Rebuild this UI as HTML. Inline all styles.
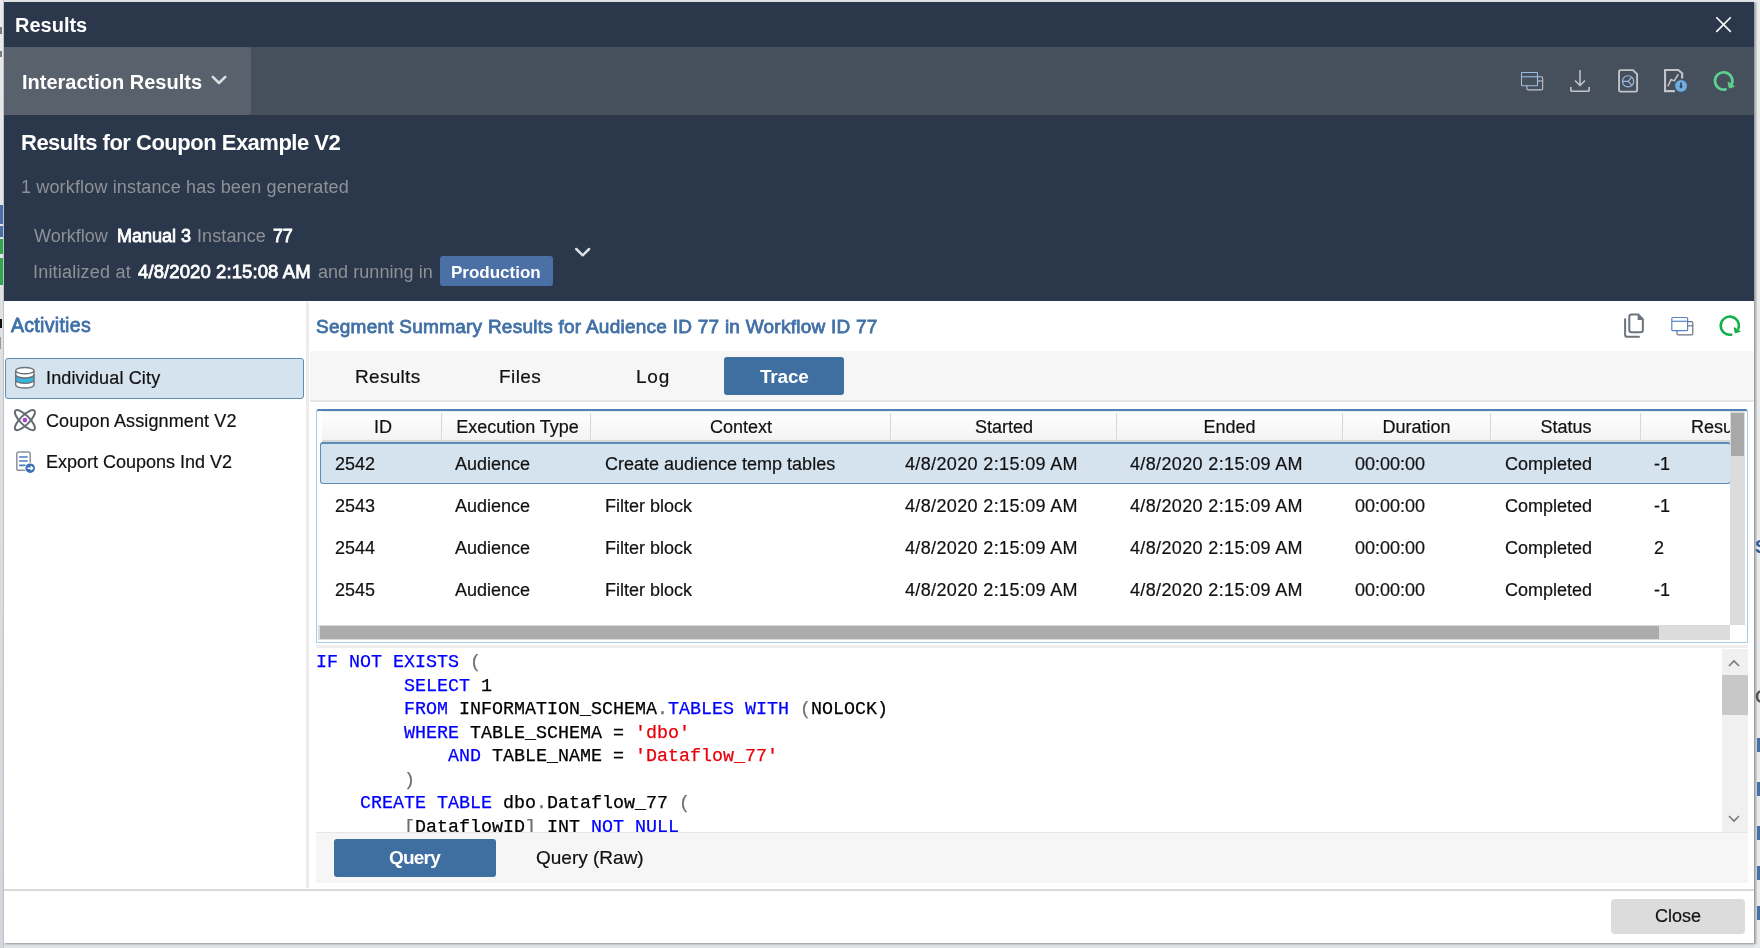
<!DOCTYPE html>
<html><head><meta charset="utf-8">
<style>
*{box-sizing:border-box;margin:0;padding:0}
html,body{width:1760px;height:948px;overflow:hidden;background:#e2e3e5;font-family:"Liberation Sans",sans-serif;position:relative}
.a{position:absolute;}
.t{position:absolute;white-space:pre;line-height:1;will-change:transform}
.t[style*="color:#111"]{-webkit-text-stroke:0.2px #111}
.gray{color:#8e9196}
.w{color:#fff}
.b{font-weight:bold}
.mono{font-family:"Liberation Mono",monospace;font-size:18.33px;line-height:1;position:absolute;white-space:pre;left:316px;will-change:transform;-webkit-text-stroke:0.25px currentColor}
.kw{color:#0000ff}.st{color:#e8000b}.pu{color:#6e6e6e}
</style></head><body>
<!-- outside -->
<div class="a" style="left:0;top:0;width:4px;height:948px;background:linear-gradient(#e8eaec,#dfe2e5 300px,#d3d6da)"></div>
<div class="a" style="left:3px;top:0;width:1px;height:948px;background:#c4c6c9"></div>
<div class="a" style="left:0;top:27px;width:2px;height:7px;background:#7a7d80"></div>
<div class="a" style="left:0;top:51px;width:2px;height:6px;background:#7a7d80"></div>
<div class="a" style="left:0;top:205px;width:3px;height:19px;background:#4a70a8"></div>
<div class="a" style="left:0;top:226px;width:3px;height:11px;background:#4a70a8"></div>
<div class="a" style="left:0;top:239px;width:3px;height:15px;background:#2ea84f"></div>
<div class="a" style="left:0;top:258px;width:3px;height:27px;background:#2ea84f"></div>
<div class="a" style="left:0;top:319px;width:2px;height:9px;background:#111"></div>
<div class="a" style="left:0;top:337px;width:1px;height:12px;background:#999"></div>
<div class="a" style="left:1755px;top:0;width:5px;height:948px;background:#e9eaeb"></div>
<div class="a" style="left:1754px;top:2px;width:2.5px;height:942px;background:#cfd0d2"></div>
<div class="t" style="left:1755px;top:538px;font-size:18px;color:#2f5f9a;font-weight:bold">S</div>
<div class="t" style="left:1755px;top:688px;font-size:18px;color:#555;font-weight:bold">C</div>
<div class="a" style="left:1757px;top:738px;width:3px;height:14px;background:#4a70a8"></div>
<div class="a" style="left:1757px;top:782px;width:3px;height:14px;background:#4a70a8"></div>
<div class="a" style="left:1757px;top:826px;width:3px;height:14px;background:#4a70a8"></div>
<div class="a" style="left:1757px;top:866px;width:3px;height:14px;background:#4a70a8"></div>
<div class="a" style="left:1757px;top:906px;width:3px;height:14px;background:#4a70a8"></div>
<!-- dialog -->
<div class="a" style="left:4px;top:2px;width:1750px;height:941px;background:#fff;box-shadow:1px 1px 2px rgba(0,0,0,.35)"></div>

<!-- title bar -->
<div class="a" style="left:4px;top:2px;width:1750px;height:45px;background:#2b384b"></div>
<div class="t w b" style="left:15px;top:15px;font-size:20px">Results</div>
<svg class="a" style="left:1714px;top:15px" width="20" height="20" viewBox="0 0 20 20"><path d="M2.3 2.3L16.8 16.9M16.8 2.3L2.3 16.9" stroke="#fff" stroke-width="1.6" fill="none"/></svg>

<!-- toolbar -->
<div class="a" style="left:4px;top:47px;width:1750px;height:68px;background:#46505d"></div>
<div class="a" style="left:4px;top:47px;width:247px;height:68px;background:#58616c;border-radius:0 3px 3px 0"></div>
<div class="t w b" style="left:22px;top:72px;font-size:20px">Interaction Results</div>
<svg class="a" style="left:208px;top:72px" width="22" height="16" viewBox="0 0 22 16"><path d="M4.8 4.8L11 11L17.3 4.8" stroke="#dde0e3" stroke-width="2.5" fill="none" stroke-linecap="round" stroke-linejoin="round"/></svg>

<!-- toolbar icons -->
<svg class="a" style="left:1516px;top:66px" width="32" height="30" viewBox="0 0 32 30">
  <rect x="10.9" y="10.8" width="15.8" height="13.1" rx="1.5" fill="none" stroke="#c0c3c7" stroke-width="1.1"/>
  <line x1="10.9" y1="15" x2="26.7" y2="15" stroke="#c0c3c7" stroke-width="1.1"/>
  <rect x="5.5" y="6.5" width="16" height="13.3" rx="0.6" fill="#46505d" stroke="#9fbbe0" stroke-width="1.1"/>
  <line x1="5.5" y1="10.8" x2="21.5" y2="10.8" stroke="#9fbbe0" stroke-width="1.1"/>
</svg>
<svg class="a" style="left:1566px;top:66px" width="28" height="30" viewBox="0 0 28 30">
  <path d="M14 4V19.5M9 14.5L14 19.5L19 14.5" stroke="#c3c5c8" stroke-width="1.5" fill="none"/>
  <path d="M4.8 21V23.5Q4.8 25.3 6.6 25.3H21.4Q23.2 25.3 23.2 23.5V21" stroke="#c3c5c8" stroke-width="1.6" fill="none"/>
</svg>
<svg class="a" style="left:1614px;top:66px" width="28" height="30" viewBox="0 0 28 30">
  <path d="M19 4.1L23.1 8.2V24.1Q23.1 25.65 21.6 25.65H6.55Q5.05 25.65 5.05 24.1V5.6Q5.05 4.1 6.55 4.1Z" stroke="#c0c3c7" stroke-width="1.9" fill="none"/>
  <circle cx="14.08" cy="15.35" r="5.6" stroke="#9dbbe3" stroke-width="1.2" fill="none"/>
  <path d="M8.5 15.35H14.08L17.83 11.19M14.08 15.35L18.04 19.31" stroke="#9dbbe3" stroke-width="1.2" fill="none"/>
</svg>
<svg class="a" style="left:1660px;top:66px" width="32" height="30" viewBox="0 0 32 30">
  <path d="M14.9 25.1H5.05V4H18.2L22.15 7.2V12.5" stroke="#c0c3c7" stroke-width="2.1" fill="none"/>
  <path d="M7.9 20.25L11.08 13.6L14.24 14.87L18.35 8.23" stroke="#c0c3c7" stroke-width="1.6" fill="none"/>
  <circle cx="21.04" cy="19.94" r="6.2" fill="#72afe0" stroke="#2f4a66" stroke-width="0.5"/>
  <path d="M21.04 16.4V20.6" stroke="#2a4661" stroke-width="1.7"/>
  <path d="M19.1 20.1H23L21.04 22.7Z" fill="#2a4661"/>
</svg>
<svg class="a" style="left:1710px;top:67px" width="28" height="28" viewBox="0 0 28 28">
  <path d="M15.63 22.42A8.7 8.7 0 1 1 22.0 16.5" stroke="#5ecf8f" stroke-width="2.7" fill="none" stroke-linecap="round"/>
  <path d="M18.1 15.1L19.3 21L24.4 19.4Z" fill="#5ecf8f" stroke="#5ecf8f" stroke-width="1" stroke-linejoin="round"/>
</svg>

<!-- header section -->
<div class="a" style="left:4px;top:115px;width:1750px;height:186px;background:#2b384b"></div>
<div class="t w b" style="left:21px;top:131.5px;font-size:22px;letter-spacing:-0.5px">Results for Coupon Example V2</div>
<div class="t gray" style="left:21px;top:178px;font-size:18px;letter-spacing:0.15px">1 workflow instance has been generated</div>
<div class="t gray" style="left:33.8px;top:227px;font-size:18px">Workflow</div><div class="t w" style="left:116.5px;top:227px;font-size:18px;-webkit-text-stroke:0.8px #fff">Manual 3</div><div class="t gray" style="left:196.5px;top:227px;font-size:18px;letter-spacing:0.1px">Instance</div><div class="t w" style="left:272.5px;top:227px;font-size:18px;-webkit-text-stroke:0.8px #fff;letter-spacing:-0.3px">77</div>
<div class="t gray" style="left:33px;top:263px;font-size:18px;letter-spacing:0.2px">Initialized at</div><div class="t w" style="left:138px;top:262.5px;font-size:18.5px;-webkit-text-stroke:0.8px #fff;letter-spacing:0.1px">4/8/2020 2:15:08 AM</div><div class="t gray" style="left:318px;top:263px;font-size:18px;letter-spacing:0.05px">and running in</div>
<div class="a" style="left:440px;top:256px;width:113px;height:30px;background:#4a70a6;border-radius:3px"></div>
<div class="t w b" style="left:451px;top:263.5px;font-size:17px">Production</div>
<svg class="a" style="left:572px;top:244px" width="22" height="16" viewBox="0 0 22 16"><path d="M4.3 5L10.7 11.3L17.1 5" stroke="#dde0e3" stroke-width="2.5" fill="none" stroke-linecap="round" stroke-linejoin="round"/></svg>

<!-- left panel -->
<div class="a" style="left:306px;top:302px;width:3px;height:586px;background:#ececec"></div>
<div class="t" style="left:10.5px;top:316.3px;font-size:19.5px;color:#3f70a9;-webkit-text-stroke:0.8px #3f70a9;letter-spacing:0.3px">Activities</div>
<div class="a" style="left:5px;top:357.5px;width:299px;height:41px;background:#d5e3ef;border:1.3px solid #5e8db5;border-radius:3px"></div>
<svg class="a" style="left:12px;top:364px" width="26" height="28" viewBox="0 0 26 28">
  <path d="M3.7 6.65V20.9A9.15 3.15 0 0 0 22 20.9V6.65Z" fill="#fff"/>
  <path d="M3.7 10.8A9.15 3.15 0 0 0 22 10.8V16.2A9.15 3.15 0 0 1 3.7 16.2Z" fill="#3ab4dc"/>
  <path d="M3.7 6.65V20.9A9.15 3.15 0 0 0 22 20.9V6.65" fill="none" stroke="#6c7176" stroke-width="1.4"/>
  <ellipse cx="12.85" cy="6.65" rx="9.15" ry="3.15" fill="#fff" stroke="#6c7176" stroke-width="1.4"/>
  <path d="M3.7 10.8A9.15 3.15 0 0 0 22 10.8M3.7 16.2A9.15 3.15 0 0 0 22 16.2" fill="none" stroke="#6c7176" stroke-width="1.4"/>
</svg>
<div class="t" style="left:45.5px;top:369px;font-size:18px;color:#111;letter-spacing:0.15px">Individual City</div>
<svg class="a" style="left:11px;top:406px" width="28" height="28" viewBox="0 0 28 28">
  <ellipse cx="13.9" cy="14.1" rx="13.4" ry="4.6" transform="rotate(45 13.9 14.1)" fill="none" stroke="#646c73" stroke-width="2"/>
  <ellipse cx="13.9" cy="14.1" rx="13.4" ry="4.6" transform="rotate(-45 13.9 14.1)" fill="none" stroke="#646c73" stroke-width="2"/>
  <circle cx="13.9" cy="14.1" r="2.3" fill="#b03cd0"/>
</svg>
<div class="t" style="left:45.5px;top:411.5px;font-size:18px;color:#111;letter-spacing:0.12px">Coupon Assignment V2</div>
<svg class="a" style="left:12px;top:448px" width="26" height="28" viewBox="0 0 26 28">
  <rect x="4.8" y="3.9" width="13.4" height="18.3" rx="1.8" fill="#fff" stroke="#8c9299" stroke-width="1.5"/>
  <path d="M7.1 9H15.7M7.1 13H15.7M7.1 17.4H15.7" stroke="#4a7bbf" stroke-width="1.7"/>
  <circle cx="18.2" cy="20.2" r="5.6" fill="#fff"/>
  <circle cx="18.2" cy="20.2" r="4.8" fill="#3b6fb8"/>
  <path d="M15.5 20.2H20.4M18.7 18.3L20.7 20.2L18.7 22.1" stroke="#fff" stroke-width="1.4" fill="none"/>
</svg>
<div class="t" style="left:45.5px;top:453px;font-size:18px;color:#111">Export Coupons Ind V2</div>

<!-- right panel header -->
<div class="t" style="left:316px;top:316.5px;font-size:19px;color:#4271a6;-webkit-text-stroke:0.8px #4271a6;letter-spacing:0.25px">Segment Summary Results for Audience ID 77 in Workflow ID 77</div>
<svg class="a" style="left:1620px;top:311px" width="28" height="30" viewBox="0 0 28 30">
  <path d="M5.1 8.2V23.7Q5.1 25.86 7.2 25.86H18.95" stroke="#6b747c" stroke-width="2" fill="none" stroke-linecap="round"/>
  <path d="M9.3 5.8Q9.3 3.55 11.5 3.55H18.3L22.85 8.1V19.1Q22.85 21.3 20.6 21.3H11.5Q9.3 21.3 9.3 19.1Z" stroke="#6b747c" stroke-width="2" fill="none"/>
  <path d="M17.6 3.6L22.9 8.9H17.6Z" fill="#6b747c"/>
</svg>
<svg class="a" style="left:1666px;top:311px" width="30" height="30" viewBox="0 0 30 30">
  <rect x="11" y="10.6" width="15.8" height="13.3" rx="1.5" fill="none" stroke="#6b737b" stroke-width="1.2"/>
  <line x1="11" y1="14.8" x2="26.8" y2="14.8" stroke="#6b737b" stroke-width="1.2"/>
  <rect x="5.8" y="6.5" width="15.8" height="13.2" rx="1" fill="#fff" stroke="#5585c0" stroke-width="1.2"/>
  <line x1="5.8" y1="10.3" x2="21.6" y2="10.3" stroke="#5585c0" stroke-width="1.2"/>
</svg>
<svg class="a" style="left:1716px;top:312px" width="28" height="28" viewBox="0 0 28 28">
  <path d="M15.38 22.66A9.1 9.1 0 1 1 22.45 16.51" stroke="#12b04a" stroke-width="2.5" fill="none" stroke-linecap="round"/>
  <path d="M18.3 15.8L19.3 20.8L23.9 19.4Z" fill="#12b04a" stroke="#12b04a" stroke-width="1.1" stroke-linejoin="round"/>
</svg>

<!-- tabs bar -->
<div class="a" style="left:310px;top:351px;width:1444px;height:51px;background:#f6f6f6;border-bottom:2px solid #e6e6e6"></div>
<div class="t" style="left:355px;top:366.5px;font-size:19px;color:#111;letter-spacing:0.3px">Results</div>
<div class="t" style="left:498.5px;top:366.5px;font-size:19px;color:#111;letter-spacing:0.4px">Files</div>
<div class="t" style="left:635.5px;top:366.5px;font-size:19px;color:#111;letter-spacing:0.8px">Log</div>
<div class="a" style="left:724px;top:357px;width:120px;height:37.5px;background:#3f6fa0;border-radius:3px"></div>
<div class="t w b" style="left:760px;top:366.5px;font-size:19px;letter-spacing:-0.2px">Trace</div>


<!-- table -->
<div class="a" style="left:316px;top:409px;width:1432px;height:234px;border:1.6px solid #a9cbe3;border-top:2px solid #4f82b5;border-radius:3px 3px 0 0"></div>
<div class="a" style="left:322px;top:411px;width:1408px;height:31px;background:linear-gradient(#fff,#f3f3f3);border-top:1.5px solid #ececec;border-bottom:2px solid #d6d6d6"></div>

<div class="a" style="left:440.5px;top:413px;width:2px;height:27px;background:linear-gradient(90deg,#d8d8d8 50%,#f8f8f8 50%)"></div>
<div class="a" style="left:590px;top:413px;width:2px;height:27px;background:linear-gradient(90deg,#d8d8d8 50%,#f8f8f8 50%)"></div>
<div class="a" style="left:890px;top:413px;width:2px;height:27px;background:linear-gradient(90deg,#d8d8d8 50%,#f8f8f8 50%)"></div>
<div class="a" style="left:1116px;top:413px;width:2px;height:27px;background:linear-gradient(90deg,#d8d8d8 50%,#f8f8f8 50%)"></div>
<div class="a" style="left:1341.5px;top:413px;width:2px;height:27px;background:linear-gradient(90deg,#d8d8d8 50%,#f8f8f8 50%)"></div>
<div class="a" style="left:1490px;top:413px;width:2px;height:27px;background:linear-gradient(90deg,#d8d8d8 50%,#f8f8f8 50%)"></div>
<div class="a" style="left:1640px;top:413px;width:2px;height:27px;background:linear-gradient(90deg,#d8d8d8 50%,#f8f8f8 50%)"></div>
<div class="t" style="left:320px;width:121px;text-align:center;top:418px;font-size:18px;color:#111;padding-left:5px">ID</div>
<div class="t" style="left:441px;width:150px;text-align:center;top:418px;font-size:18px;color:#111;padding-left:3px">Execution Type</div>
<div class="t" style="left:591px;width:300px;text-align:center;top:418px;font-size:18px;color:#111">Context</div>
<div class="t" style="left:891px;width:226px;text-align:center;top:418px;font-size:18px;color:#111">Started</div>
<div class="t" style="left:1117px;width:225px;text-align:center;top:418px;font-size:18px;color:#111">Ended</div>
<div class="t" style="left:1342px;width:149px;text-align:center;top:418px;font-size:18px;color:#111">Duration</div>
<div class="t" style="left:1491px;width:150px;text-align:center;top:418px;font-size:18px;color:#111">Status</div>
<div class="t" style="left:1691px;top:418px;font-size:18px;color:#111">Resu</div>
<div class="a" style="left:319.5px;top:442px;width:1411px;height:41.5px;background:#d5e3ef;border:1.5px solid #5b8db8;border-top-width:2px;border-radius:3px"></div>
<div class="t" style="left:334.5px;top:455px;font-size:18px;color:#111">2542</div>
<div class="t" style="left:454.5px;top:455px;font-size:18px;color:#111">Audience</div>
<div class="t" style="left:604.5px;top:455px;font-size:18px;color:#111">Create audience temp tables</div>
<div class="t" style="left:904.5px;top:455px;font-size:18px;color:#111;letter-spacing:0.36px">4/8/2020 2:15:09 AM</div>
<div class="t" style="left:1129.5px;top:455px;font-size:18px;color:#111;letter-spacing:0.36px">4/8/2020 2:15:09 AM</div>
<div class="t" style="left:1354.5px;top:455px;font-size:18px;color:#111">00:00:00</div>
<div class="t" style="left:1504.5px;top:455px;font-size:18px;color:#111">Completed</div>
<div class="t" style="left:1653.5px;top:455px;font-size:18px;color:#111">-1</div>
<div class="t" style="left:334.5px;top:497px;font-size:18px;color:#111">2543</div>
<div class="t" style="left:454.5px;top:497px;font-size:18px;color:#111">Audience</div>
<div class="t" style="left:604.5px;top:497px;font-size:18px;color:#111">Filter block</div>
<div class="t" style="left:904.5px;top:497px;font-size:18px;color:#111;letter-spacing:0.36px">4/8/2020 2:15:09 AM</div>
<div class="t" style="left:1129.5px;top:497px;font-size:18px;color:#111;letter-spacing:0.36px">4/8/2020 2:15:09 AM</div>
<div class="t" style="left:1354.5px;top:497px;font-size:18px;color:#111">00:00:00</div>
<div class="t" style="left:1504.5px;top:497px;font-size:18px;color:#111">Completed</div>
<div class="t" style="left:1653.5px;top:497px;font-size:18px;color:#111">-1</div>
<div class="t" style="left:334.5px;top:539px;font-size:18px;color:#111">2544</div>
<div class="t" style="left:454.5px;top:539px;font-size:18px;color:#111">Audience</div>
<div class="t" style="left:604.5px;top:539px;font-size:18px;color:#111">Filter block</div>
<div class="t" style="left:904.5px;top:539px;font-size:18px;color:#111;letter-spacing:0.36px">4/8/2020 2:15:09 AM</div>
<div class="t" style="left:1129.5px;top:539px;font-size:18px;color:#111;letter-spacing:0.36px">4/8/2020 2:15:09 AM</div>
<div class="t" style="left:1354.5px;top:539px;font-size:18px;color:#111">00:00:00</div>
<div class="t" style="left:1504.5px;top:539px;font-size:18px;color:#111">Completed</div>
<div class="t" style="left:1653.5px;top:539px;font-size:18px;color:#111">2</div>
<div class="t" style="left:334.5px;top:581px;font-size:18px;color:#111">2545</div>
<div class="t" style="left:454.5px;top:581px;font-size:18px;color:#111">Audience</div>
<div class="t" style="left:604.5px;top:581px;font-size:18px;color:#111">Filter block</div>
<div class="t" style="left:904.5px;top:581px;font-size:18px;color:#111;letter-spacing:0.36px">4/8/2020 2:15:09 AM</div>
<div class="t" style="left:1129.5px;top:581px;font-size:18px;color:#111;letter-spacing:0.36px">4/8/2020 2:15:09 AM</div>
<div class="t" style="left:1354.5px;top:581px;font-size:18px;color:#111">00:00:00</div>
<div class="t" style="left:1504.5px;top:581px;font-size:18px;color:#111">Completed</div>
<div class="t" style="left:1653.5px;top:581px;font-size:18px;color:#111">-1</div>
<div class="a" style="left:318px;top:600px;width:1412px;height:25px;overflow:hidden">
<div class="t" style="left:16.5px;top:23px;font-size:18px;color:#111">2546</div>
<div class="t" style="left:136.5px;top:23px;font-size:18px;color:#111">Audience</div>
<div class="t" style="left:286.5px;top:23px;font-size:18px;color:#111">Filter block</div>
<div class="t" style="left:586.5px;top:23px;font-size:18px;color:#111;letter-spacing:0.36px">4/8/2020 2:15:09 AM</div>
<div class="t" style="left:811.5px;top:23px;font-size:18px;color:#111;letter-spacing:0.36px">4/8/2020 2:15:09 AM</div>
<div class="t" style="left:1036.5px;top:23px;font-size:18px;color:#111">00:00:00</div>
<div class="t" style="left:1186.5px;top:23px;font-size:18px;color:#111">Completed</div>
<div class="t" style="left:1335.5px;top:23px;font-size:18px;color:#111">-1</div>
</div>

<!-- h scrollbar -->
<div class="a" style="left:318px;top:625px;width:1412px;height:15px;background:#dcdcdc"></div>
<div class="a" style="left:320px;top:626px;width:1339px;height:13px;background:#acacac"></div>
<div class="a" style="left:1730px;top:625px;width:15px;height:15px;background:#fff"></div>
<!-- v scrollbar -->
<div class="a" style="left:1730px;top:411px;width:15px;height:214px;background:#dcdcdc"></div>
<div class="a" style="left:1731px;top:413px;width:13px;height:43px;background:#a8a8a8"></div>
<div class="a" style="left:316px;top:645px;width:1432px;height:3px;background:#eeeeee"></div>

<div class="a" style="left:316px;top:649px;width:1406px;height:183px;overflow:hidden">
<div class="mono" style="left:0;top:5.00px"><span class="kw">IF NOT EXISTS</span> <span class="pu">(</span></div>
<div class="mono" style="left:0;top:28.50px">        <span class="kw">SELECT</span> 1</div>
<div class="mono" style="left:0;top:52.00px">        <span class="kw">FROM</span> INFORMATION_SCHEMA<span class="pu">.</span><span class="kw">TABLES</span> <span class="kw">WITH</span> <span class="pu">(</span>NOLOCK)</div>
<div class="mono" style="left:0;top:75.50px">        <span class="kw">WHERE</span> TABLE_SCHEMA = <span class="st">'dbo'</span></div>
<div class="mono" style="left:0;top:99.00px">            <span class="kw">AND</span> TABLE_NAME = <span class="st">'Dataflow_77'</span></div>
<div class="mono" style="left:0;top:122.50px">        <span class="pu">)</span></div>
<div class="mono" style="left:0;top:146.00px">    <span class="kw">CREATE TABLE</span> dbo<span class="pu">.</span>Dataflow_77 <span class="pu">(</span></div>
<div class="mono" style="left:0;top:169.50px">        <span class="pu">[</span>DataflowID<span class="pu">]</span> INT <span class="kw">NOT NULL</span></div>
</div>

<!-- code v scrollbar -->
<div class="a" style="left:1722px;top:649px;width:26px;height:183px;background:#f0f0f0"></div>
<div class="a" style="left:1722px;top:675px;width:26px;height:40px;background:#c8c8c8"></div>
<svg class="a" style="left:1726px;top:656px" width="16" height="14" viewBox="0 0 16 14"><path d="M3 10L8 5L13 10" stroke="#7a7a7a" stroke-width="1.6" fill="none"/></svg>
<svg class="a" style="left:1726px;top:812px" width="16" height="14" viewBox="0 0 16 14"><path d="M3 4L8 9L13 4" stroke="#7a7a7a" stroke-width="1.6" fill="none"/></svg>

<!-- bottom tabs -->
<div class="a" style="left:316px;top:831.5px;width:1432px;height:51.5px;background:#f6f6f6;border-top:1.5px solid #e6e6e6"></div>
<div class="a" style="left:334px;top:839px;width:162px;height:38px;background:#3f6fa0;border-radius:3px"></div>
<div class="t w b" style="left:389px;top:848.3px;font-size:19px;letter-spacing:-0.8px">Query</div>
<div class="t" style="left:535.5px;top:848.3px;font-size:19px;color:#111">Query (Raw)</div>

<!-- footer -->
<div class="a" style="left:4px;top:889px;width:1750px;height:1.5px;background:#d9d9d9"></div>
<div class="a" style="left:1611px;top:898.5px;width:134px;height:35.5px;background:#dcdcdc;border-radius:4px"></div>
<div class="t" style="left:1655px;top:907px;font-size:18px;color:#111">Close</div>

</body></html>
